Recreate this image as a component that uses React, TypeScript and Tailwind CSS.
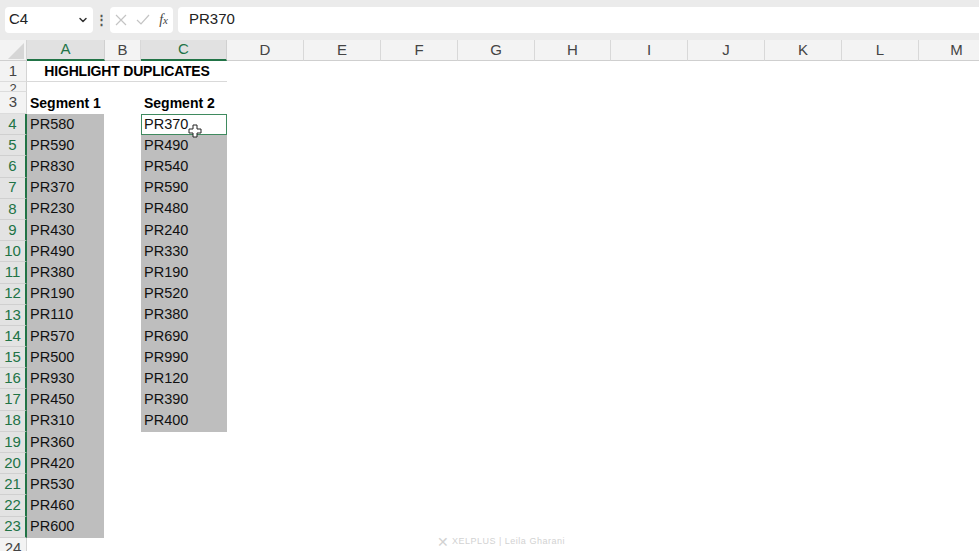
import { ChevronDown } from "lucide-react";

const colA = ["PR580", "PR590", "PR830", "PR370", "PR230", "PR430", "PR490", "PR380", "PR190", "PR110", "PR570", "PR500", "PR930", "PR450", "PR310", "PR360", "PR420", "PR530", "PR460", "PR600"];
const colC = ["PR370", "PR490", "PR540", "PR590", "PR480", "PR240", "PR330", "PR190", "PR520", "PR380", "PR690", "PR990", "PR120", "PR390", "PR400"];

const letters = ["D", "E", "F", "G", "H", "I", "J", "K", "L", "M"];

function Cursor() {
  return (
    <svg width="14" height="14" viewBox="0 0 14 14" className="absolute left-[46px] top-[9px]">
      <path d="M5 1h4v4h4v4H9v4H5V9H1V5h4z" fill="#fff" stroke="#222" strokeWidth="1" />
    </svg>
  );
}

function RowHead({ n, active }: { n: number; active?: boolean }) {
  return (
    <div
      className={`w-[27px] shrink-0 flex items-center justify-center text-[15px] border-b ${
        active
          ? "bg-[#e3e3e3] text-[#217346] border-r-2 border-r-[#217346] border-b-[#d0d0d0]"
          : "bg-[#f3f3f3] text-[#444] border-r border-r-[#d4d4d4] border-b-[#dcdcdc]"
      }`}
    >
      {n}
    </div>
  );
}

export default function App() {
  return (
    <div className="w-[979px] h-[551px] overflow-hidden bg-white" style={{ fontFamily: '"Liberation Sans", Arial, sans-serif' }}>
      {/* formula bar */}
      <div className="h-[40px] bg-[#ebebeb] flex items-center pl-[5px] pb-[1px]">
        <div className="w-[88px] h-[26px] bg-white rounded-[4px] flex items-center justify-between pl-[4px] pr-[4px] text-[15px] text-[#222]">
          <span>C4</span>
          <ChevronDown size={12} strokeWidth={3} color="#333" />
        </div>
        <div className="w-[17px] text-center text-[#555] text-[13px] font-bold">⋮</div>
        <div className="w-[63px] h-[26px] bg-white rounded-[4px] flex items-center justify-between px-[5px]">
          <svg width="12" height="12" viewBox="0 0 12 12">
            <path d="M1 1l10 10M11 1L1 11" stroke="#c4c4c4" strokeWidth="1.2" />
          </svg>
          <svg width="14" height="12" viewBox="0 0 14 12">
            <path d="M1 6l4 4 8-9" stroke="#c4c4c4" strokeWidth="1.2" fill="none" />
          </svg>
          <span className="text-[14px] italic text-[#444]" style={{ fontFamily: '"Liberation Serif", serif' }}>
            f<span className="text-[11px]">x</span>
          </span>
        </div>
        <div className="ml-[5px] flex-1 h-[26px] bg-white rounded-l-[4px] flex items-center pl-[11px] text-[15px] text-[#222]">
          PR370
        </div>
      </div>

      {/* column headers */}
      <div className="flex h-[21px] bg-[#f3f3f3] text-[15px] text-[#444]">
        <div className="w-[27px] shrink-0 relative border-r border-[#d4d4d4] border-b border-b-[#cfcfcf]">
          <svg width="27" height="21" className="absolute inset-0">
            <path d="M8 19L24 3V19Z" fill="#d6d6d6" />
          </svg>
        </div>
        <div className="w-[78px] shrink-0 flex items-center justify-center bg-[#e1e1e1] text-[#217346] border-r border-[#d0d0d0] border-b-2 border-b-[#217346]">A</div>
        <div className="w-[36px] shrink-0 flex items-center justify-center border-r border-[#d8d8d8] border-b border-b-[#cfcfcf]">B</div>
        <div className="w-[86px] shrink-0 flex items-center justify-center bg-[#e1e1e1] text-[#217346] border-r border-[#d0d0d0] border-b-2 border-b-[#217346]">C</div>
        {letters.map((l, i) => (
          <div key={l} className={`${i % 5 === 4 ? "w-[76px]" : "w-[77px]"} shrink-0 flex items-center justify-center border-r border-[#d8d8d8] border-b border-b-[#cfcfcf]`}>
            {l}
          </div>
        ))}
      </div>

      {/* row 1 */}
      <div className="flex h-[21px]">
        <RowHead n={1} />
        <div className="w-[200px] flex items-center justify-center font-bold text-[14px] text-black border-b border-[#d9d9d9] tracking-[-0.2px]">
          HIGHLIGHT DUPLICATES
        </div>
      </div>
      {/* row 2 */}
      <div className="flex h-[10px] overflow-hidden">
        <div className="w-[27px] shrink-0 bg-[#f3f3f3] border-r border-[#d4d4d4] border-b border-b-[#dcdcdc] text-[13px] text-[#444] leading-[13px] text-center overflow-hidden">2</div>
      </div>
      {/* row 3 */}
      <div className="flex h-[22px]">
        <RowHead n={3} />
        <div className="w-[78px] flex items-center pl-[3px] font-bold text-[14px] text-black">Segment 1</div>
        <div className="w-[36px]" />
        <div className="w-[86px] flex items-center pl-[3px] font-bold text-[14px] text-black">Segment 2</div>
      </div>

      {/* data rows */}
      {colA.map((a, i) => {
        const c = colC[i];
        return (
          <div key={i} className="flex h-[21.2px]">
            <RowHead n={i + 4} active />
            <div className="w-[77px] bg-[#bebebe] flex items-center pl-[3px] text-[14.5px] text-[#111]">{a}</div>
            <div className="w-[37px]" />
            {i === 0 ? (
              <div className="relative w-[86px] bg-white border border-[#3f8a5f] flex items-center pl-[2px] text-[14.5px] text-[#111]">
                {c}
                <Cursor />
              </div>
            ) : c ? (
              <div className="w-[86px] bg-[#bebebe] flex items-center pl-[3px] text-[14.5px] text-[#111]">{c}</div>
            ) : null}
          </div>
        );
      })}

      {/* row 24 */}
      <div className="flex h-[21px] relative">
        <RowHead n={24} />
        <div className="absolute left-[437px] top-[-3px] flex items-center gap-[3px] text-[9px] text-[#d2d2d2]">
          <span className="text-[14px] leading-none">✕</span>
          <span className="tracking-[0.5px]">XELPLUS | Leila Gharani</span>
        </div>
      </div>
    </div>
  );
}
